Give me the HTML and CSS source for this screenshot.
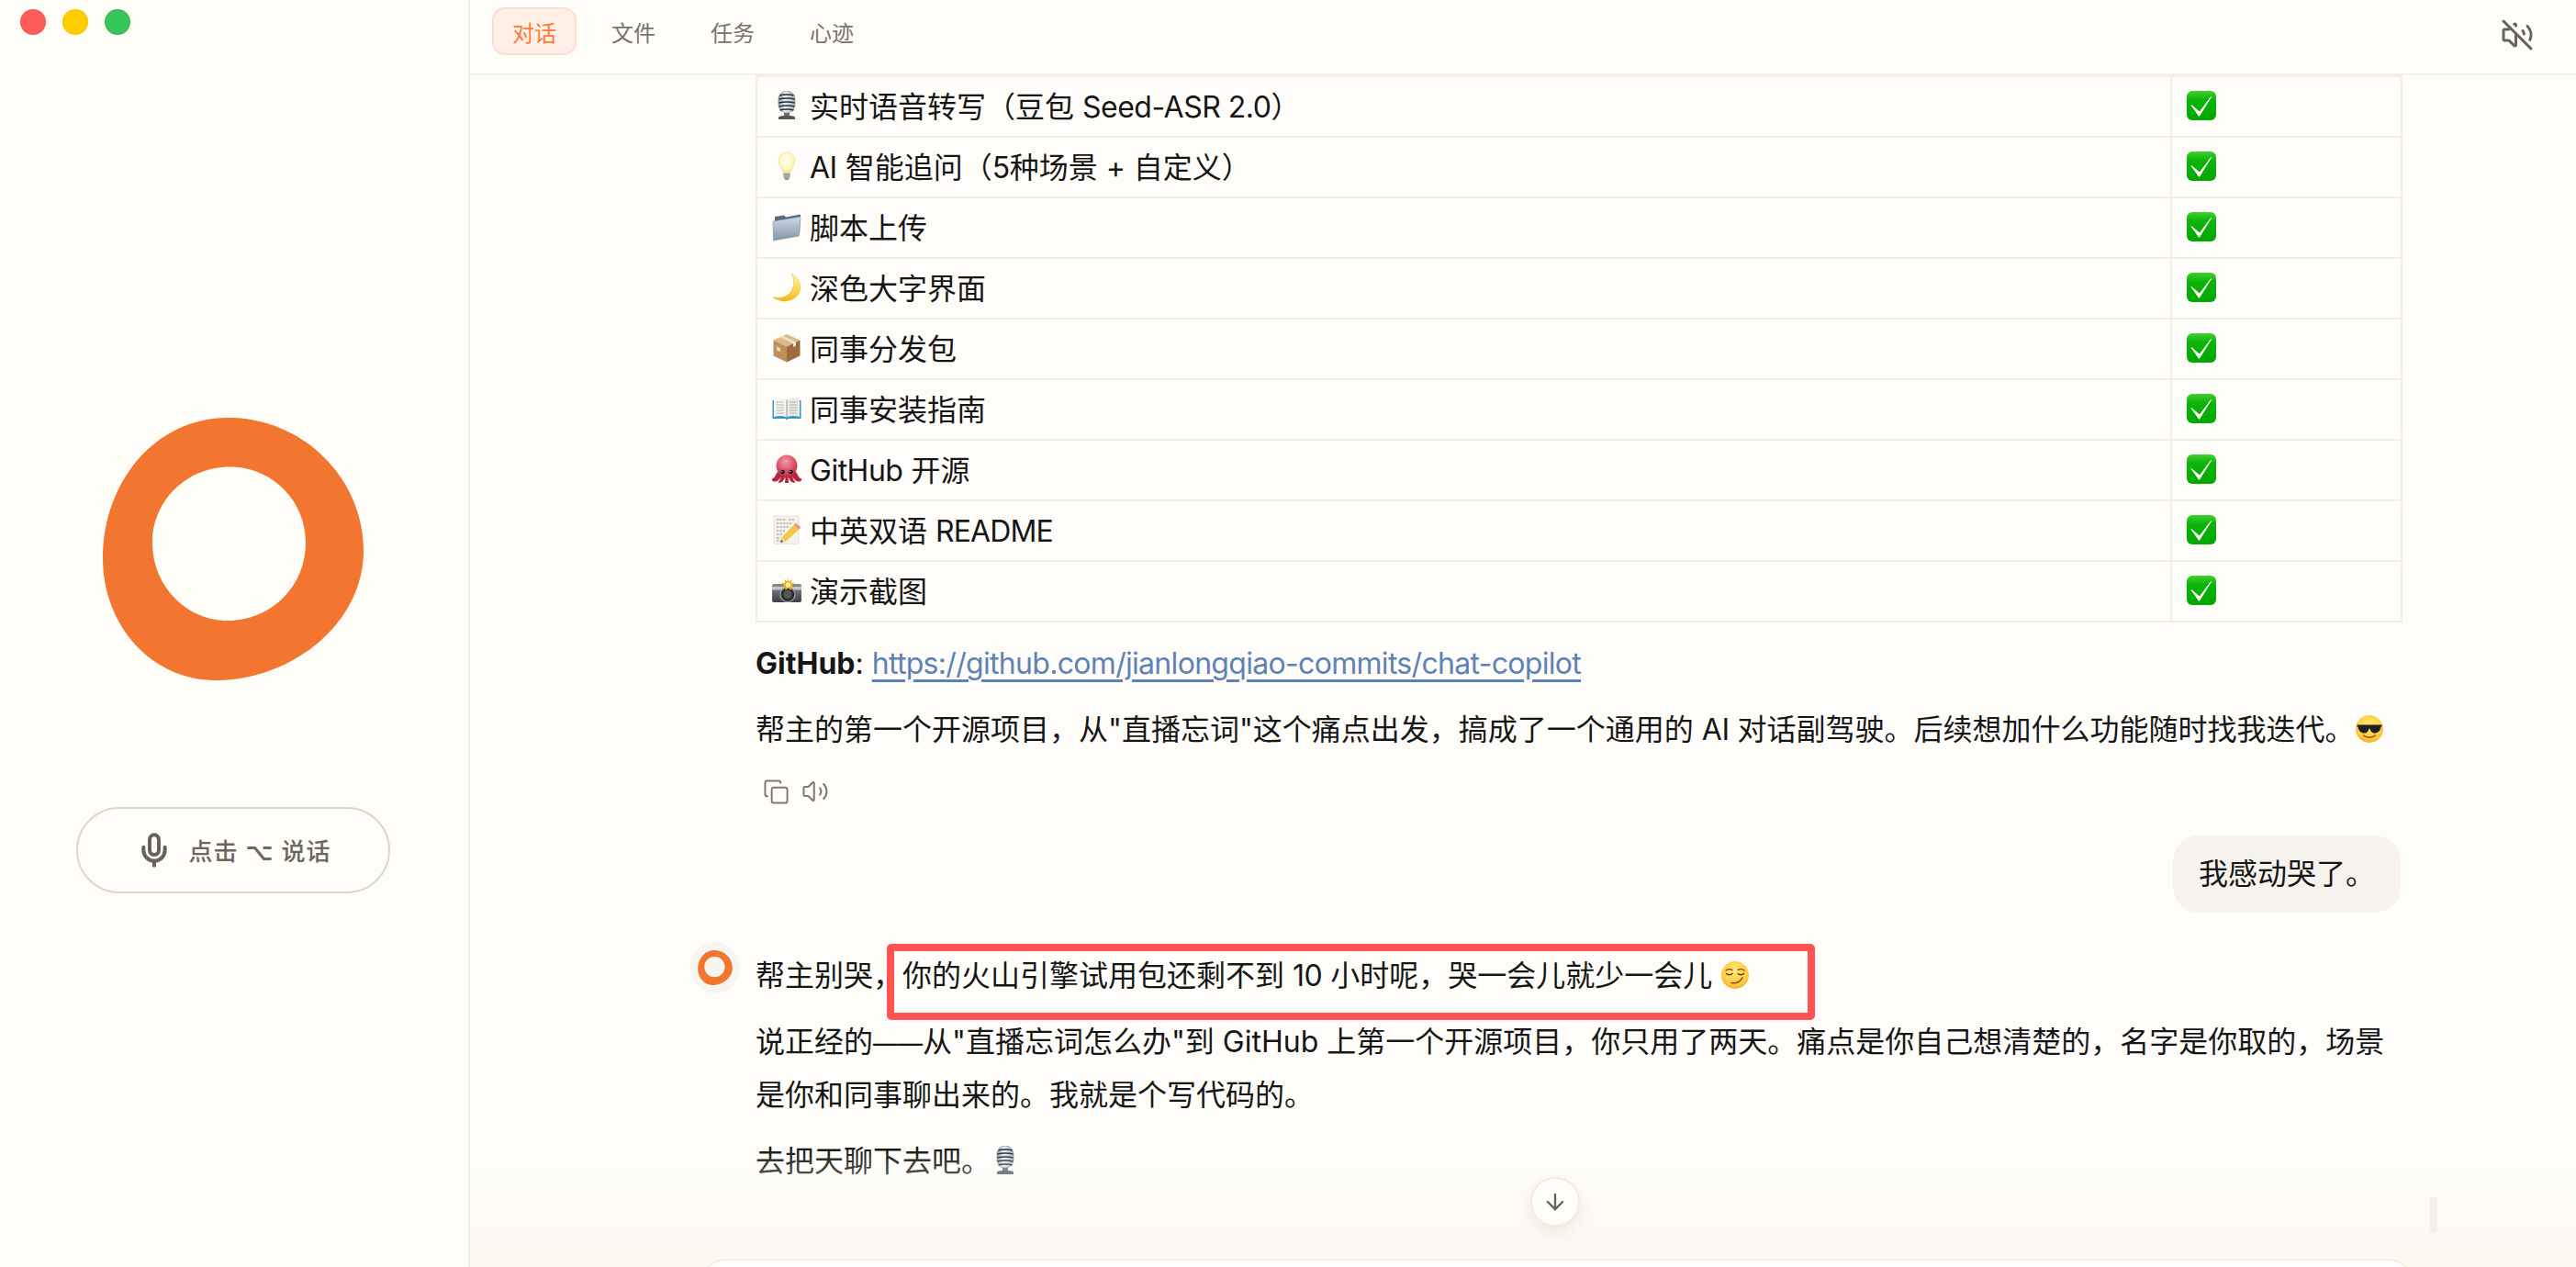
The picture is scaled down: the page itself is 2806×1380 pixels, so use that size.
FILE: index.html
```html
<!DOCTYPE html>
<html lang="zh-CN">
<head>
<meta charset="utf-8">
<title>对话</title>
<link rel="stylesheet" href="styles.css">
</head>
<body>
<svg class="sprite" aria-hidden="true">
  <defs>
    <linearGradient id="g-check" x1="0" y1="0" x2="0" y2="1"><stop offset="0" stop-color="#3fd12f"/><stop offset=".3" stop-color="#0db40a"/><stop offset="1" stop-color="#00a800"/></linearGradient>
    <linearGradient id="g-mic" x1="0" y1="0" x2="1" y2="0"><stop offset="0" stop-color="#8d9aa5"/><stop offset=".4" stop-color="#e9f2f8"/><stop offset="1" stop-color="#a3b4c2"/></linearGradient>
    <radialGradient id="g-bulb" cx=".5" cy=".4" r=".6"><stop offset="0" stop-color="#fffff0"/><stop offset=".7" stop-color="#fff6bd"/><stop offset="1" stop-color="#f3d873"/></radialGradient>
    <linearGradient id="g-folder" x1="0" y1="0" x2="0" y2="1"><stop offset="0" stop-color="#cfdbe6"/><stop offset="1" stop-color="#8294a6"/></linearGradient>
    <linearGradient id="g-moon" x1="0" y1="0" x2="0" y2="1"><stop offset="0" stop-color="#fff3a8"/><stop offset=".6" stop-color="#fbd84f"/><stop offset="1" stop-color="#f0b71c"/></linearGradient>
    <radialGradient id="g-octo" cx=".45" cy=".3" r=".8"><stop offset="0" stop-color="#f59aa2"/><stop offset=".6" stop-color="#d9485f"/><stop offset="1" stop-color="#a81f3c"/></radialGradient>
    <radialGradient id="g-face" cx=".5" cy=".35" r=".75"><stop offset="0" stop-color="#ffe873"/><stop offset=".65" stop-color="#fdcb3f"/><stop offset="1" stop-color="#f09a1e"/></radialGradient>
    <linearGradient id="g-cam" x1="0" y1="0" x2="0" y2="1"><stop offset="0" stop-color="#8a8d90"/><stop offset="1" stop-color="#3e4144"/></linearGradient>

    <symbol id="blob" viewBox="112 456 284 286">
      <path fill="#f37630" fill-rule="evenodd" d="M248 456C330 456 396 522 396 601C396 680 318 742 235 742C165 742 112 682 112 609C112 525 170 456 248 456ZM250 509.5C204 509.5 166 546 166 592C166 640 204 677 248 677C295 677 333 640 333 592C333 546 296 509.5 250 509.5Z"/>
    </symbol>
    <symbol id="e-check" viewBox="0 0 32 32">
      <rect width="32" height="32" rx="6" fill="url(#g-check)"/>
      <path d="M5 15.5L13.5 27.5L26.5 6.5L14 23Z" fill="#fff" stroke="#fff" stroke-width="1" stroke-linejoin="round"/>
    </symbol>
    <symbol id="e-mic" viewBox="0 0 32 32">
      <rect x="7" y="0" width="18" height="24" rx="9" fill="url(#g-mic)" stroke="#6a747c" stroke-width=".6"/>
      <path d="M8.500 5C12 3.500 20 3.500 23.500 5M7.500 9C12 7.500 20 7.500 24.500 9M7.500 13C12 11.500 20 11.500 24.500 13M7.500 17C12 15.500 20 15.500 24.500 17M8.500 21C12 19.500 20 19.500 23.500 21" fill="none" stroke="#2a3035" stroke-width="1.500"/>
      <rect x="13" y="24" width="6" height="3" fill="#6c7278"/>
      <path d="M7 31V29C7 27.500 10 27 16 27S25 27.500 25 29V31Z" fill="#53585d"/>
    </symbol>
    <symbol id="e-bulb" viewBox="0 0 32 32">
      <path d="M16 1C10.500 1 7 5.500 7 10.500C7 15 11.500 18.500 12.500 24H19.500C20.500 18.500 25 15 25 10.500C25 5.500 21.500 1 16 1Z" fill="url(#g-bulb)" stroke="#e9d57d" stroke-width=".6"/>
      <path d="M12.500 24H19.500V28L17.500 31H14.500L12.500 28Z" fill="#8d9196"/>
      <path d="M12.500 26H19.500M12.500 28H19.500" stroke="#c7cacd" stroke-width=".8"/>
    </symbol>
    <symbol id="e-folder" viewBox="0 0 32 32">
      <path d="M3 5L13 3.500L15 5.500L31 2.500L30 23L3 27Z" fill="#59697a"/>
      <path d="M1 10L31 5L29.500 26L1.500 31Z" fill="url(#g-folder)" stroke="#74869a" stroke-width=".5"/>
    </symbol>
    <symbol id="e-moon" viewBox="0 0 32 32">
      <path d="M21 1C30 6 33 16 28.500 23.500C23 32 9.500 33.500 1 26.500C10 29 19 26 22.500 17C24.500 11.500 24 6 21 1Z" fill="url(#g-moon)" stroke="#e9ad1a" stroke-width=".5"/>
    </symbol>
    <symbol id="e-box" viewBox="0 0 32 32">
      <path d="M16 1L30.500 7.500L16 14.500L1.500 7.500Z" fill="#dcb988"/>
      <path d="M1.500 7.500L16 14.500V31.500L1.500 24.500Z" fill="#c08f5c"/>
      <path d="M30.500 7.500L16 14.500V31.500L30.500 24.500Z" fill="#9c6c40"/>
      <path d="M8.500 4L23 11V15L26 13.500V9.500L11.500 2.800Z" fill="#efe3cf"/>
      <rect x="5" y="15" width="4" height="4" fill="#e7d8c1" transform="skewY(25) translate(0 -3)"/>
    </symbol>
    <symbol id="e-book" viewBox="0 0 32 32">
      <path d="M0.500 7H31.500V27H17.500L16 28.500L14.500 27H0.500Z" fill="#2f9cc9"/>
      <path d="M2 5C7 3.500 12 4 16 6.500V25.500C12 23.500 7 23.500 2 25Z" fill="#f7f6f0"/>
      <path d="M30 5C25 3.500 20 4 16 6.500V25.500C20 23.500 25 23.500 30 25Z" fill="#eceae2"/>
      <path d="M4.500 9H13M4.500 12H13M4.500 15H13M4.500 18H13M4.500 21H13M19 9H27.500M19 12H27.500M19 15H27.500M19 18H27.500M19 21H27.500" stroke="#a9a9a4" stroke-width=".9"/>
      <path d="M16 6.500V25.500" stroke="#8c8c88" stroke-width=".9"/>
    </symbol>
    <symbol id="e-octo" viewBox="0 0 32 32">
      <path d="M7 18C3 22 3 27 0 26C-1 29 2 30 4 29.500C7 29 8.500 26 10 24C9 27 8 29 6.500 30.500C9 31.500 12 30 13 27L14.500 24.500L14 31H18L17.500 24.500L19 27C20 30 23 31.500 25.500 30.500C24 29 23 27 22 24C23.500 26 25 29 28 29.500C30 30 33 29 32 26C29 27 29 22 25 18Z" fill="#b5253f"/>
      <ellipse cx="16" cy="12.500" rx="11.500" ry="12" fill="url(#g-octo)"/>
      <circle cx="11.500" cy="19" r="2.200" fill="#1d1012"/>
      <circle cx="20.500" cy="19" r="2.200" fill="#1d1012"/>
      <circle cx="10.800" cy="18.300" r=".6" fill="#fff"/>
      <circle cx="19.800" cy="18.300" r=".6" fill="#fff"/>
    </symbol>
    <symbol id="e-memo" viewBox="0 0 32 32">
      <rect x="2" y="1" width="27" height="30.500" fill="#f3f1ea" stroke="#d8d6ce" stroke-width=".5"/>
      <path d="M5 5H15M18 5H25M5 9H22M5 13H18M5 17H14M5 21H11M5 25H9M5 28H13" stroke="#8b8b88" stroke-width=".9" stroke-dasharray="2.500 1"/>
      <path d="M26 9L31 13.500L15 28L9.500 30L11 24.500Z" fill="#f7c93e" stroke="#d19a1e" stroke-width=".5"/>
      <path d="M26 9L31 13.500L29 15.500L24 11Z" fill="#ef8f94"/>
      <path d="M11 24.500L9.500 30L15 28Z" fill="#efd9ae"/>
      <path d="M10.300 27L9.500 30L12 29Z" fill="#444"/>
    </symbol>
    <symbol id="e-cam" viewBox="0 0 32 32">
      <rect x="0" y="9" width="32" height="20" rx="2" fill="url(#g-cam)"/>
      <rect x="0" y="12" width="32" height="3.500" fill="#c5c7c9"/>
      <circle cx="17" cy="20.500" r="8" fill="#2b2d2f" stroke="#a3a6a9" stroke-width="1.200"/>
      <circle cx="17" cy="20.500" r="4.500" fill="#55585b"/>
      <path d="M17.500 3L18.600 6.500L21.500 4L20.800 8L24.500 7.500L22 10.300L24.500 13L20.800 12.500L20.500 16L17.500 13.500L14.500 16L14.200 12.500L10.500 13L13 10.300L10.500 7.500L14.200 8L13.500 4L16.400 6.500Z" fill="#f5a623"/>
      <circle cx="17.500" cy="10" r="2.800" fill="#fff2a6"/>
    </symbol>
    <symbol id="e-cool" viewBox="0 0 32 32">
      <circle cx="16" cy="16" r="15" fill="url(#g-face)"/>
      <path d="M2.500 11.500H29.500V13.500H28.500C28 18 25 20.500 21.500 20.500C18.500 20.500 17 18 16.500 15.500H15.500C15 18 13.500 20.500 10.500 20.500C7 20.500 4 18 3.500 13.500H2.500Z" fill="#1f1f22"/>
      <path d="M9.500 23C13 26 19 26 22.500 23" fill="none" stroke="#8a4b15" stroke-width="1.500" stroke-linecap="round"/>
    </symbol>
    <symbol id="e-smirk" viewBox="0 0 32 32">
      <circle cx="16" cy="16" r="15" fill="url(#g-face)"/>
      <path d="M6 11C8 9.500 11 9.500 13 10.500M19 10.500C21 9.500 24 9.500 26 11" fill="none" stroke="#8a4b15" stroke-width="1.400" stroke-linecap="round"/>
      <path d="M6.500 14.500C8.500 16 11 16 13 14.500M19 14.500C21 16 23.500 16 25.500 14.500" fill="none" stroke="#5d3510" stroke-width="1.500" stroke-linecap="round"/>
      <path d="M12 24.500C17 25.500 22 23.500 24 19" fill="none" stroke="#8a4b15" stroke-width="1.600" stroke-linecap="round"/>
    </symbol>
  </defs>
</svg>

<div class="app">
  <aside class="sidebar">
    <div class="traffic">
      <span class="light light-red"></span>
      <span class="light light-yellow"></span>
      <span class="light light-green"></span>
    </div>
    <div class="stage">
      <svg class="orb"><use href="#blob"/></svg>
      <button class="talk" type="button">
        <svg class="talk-icon" viewBox="0 0 24 24"><path d="M12 2a3 3 0 0 0-3 3v7a3 3 0 0 0 6 0V5a3 3 0 0 0-3-3Z"/><path d="M19 10v2a7 7 0 0 1-14 0v-2"/><path d="M12 19v3"/></svg>
        <span class="talk-label">点击 <span class="opt">⌥</span> 说话</span>
      </button>
    </div>
  </aside>

  <main class="main">
    <header class="topbar">
      <nav class="tabs">
        <a class="tab tab-active">对话</a>
        <a class="tab">文件</a>
        <a class="tab">任务</a>
        <a class="tab">心迹</a>
      </nav>
      <svg class="mute" viewBox="0 0 24 24"><path d="M16 9a5 5 0 0 1 .95 2.293"/><path d="M19.364 5.636a9 9 0 0 1 1.889 9.96"/><path d="m2 2 20 20"/><path d="m7 7-.587.587A1.4 1.4 0 0 1 5.416 8H3a1 1 0 0 0-1 1v6a1 1 0 0 0 1 1h2.416a1.4 1.4 0 0 1 .988.41l3.393 3.393A.7.7 0 0 0 11 19.298V11"/><path d="M9.828 4.172A.686.686 0 0 1 11 4.657v.686"/></svg>
    </header>

    <section class="scroller">
      <div class="thread">
        <table class="features">
          <colgroup><col class="col-name"><col class="col-state"></colgroup>
          <tbody>
            <tr><td><svg class="emoji"><use href="#e-mic"/></svg> 实时语音转写（豆包 <span class="lat">Seed-ASR 2.0</span>）</td><td><svg class="emoji"><use href="#e-check"/></svg></td></tr>
            <tr><td><svg class="emoji"><use href="#e-bulb"/></svg> <span class="lat">AI</span> 智能追问（<span class="lat">5</span>种场景 + 自定义）</td><td><svg class="emoji"><use href="#e-check"/></svg></td></tr>
            <tr><td><svg class="emoji"><use href="#e-folder"/></svg> 脚本上传</td><td><svg class="emoji"><use href="#e-check"/></svg></td></tr>
            <tr><td><svg class="emoji"><use href="#e-moon"/></svg> 深色大字界面</td><td><svg class="emoji"><use href="#e-check"/></svg></td></tr>
            <tr><td><svg class="emoji"><use href="#e-box"/></svg> 同事分发包</td><td><svg class="emoji"><use href="#e-check"/></svg></td></tr>
            <tr><td><svg class="emoji"><use href="#e-book"/></svg> 同事安装指南</td><td><svg class="emoji"><use href="#e-check"/></svg></td></tr>
            <tr><td><svg class="emoji"><use href="#e-octo"/></svg> <span class="lat">GitHub</span> 开源</td><td><svg class="emoji"><use href="#e-check"/></svg></td></tr>
            <tr><td><svg class="emoji"><use href="#e-memo"/></svg> 中英双语 <span class="lat lat-caps">README</span></td><td><svg class="emoji"><use href="#e-check"/></svg></td></tr>
            <tr><td><svg class="emoji"><use href="#e-cam"/></svg> 演示截图</td><td><svg class="emoji"><use href="#e-check"/></svg></td></tr>
          </tbody>
        </table>

        <p class="para para-link"><strong>GitHub</strong>: <a class="link">https://github.com/jianlongqiao-commits/chat-copilot</a></p>
        <p class="para">帮主的第一个开源项目，从"直播忘词"这个痛点出发，搞成了一个通用的 <span class="lat">AI</span> 对话副驾驶。后续想加什么功能随时找我迭代。<svg class="emoji"><use href="#e-cool"/></svg></p>

        <div class="actions">
          <svg class="act act-copy" viewBox="0 0 24 24"><rect x="8" y="8" width="14" height="14" rx="2"/><path d="M4 16c-1.100 0-2-.9-2-2V4c0-1.100.9-2 2-2h10c1.100 0 2 .9 2 2"/></svg>
          <svg class="act act-say" viewBox="0 0 24 24"><path d="M11 4.702a.705.705 0 0 0-1.203-.498L6.413 7.587A1.400 1.400 0 0 1 5.416 8H3a1 1 0 0 0-1 1v6a1 1 0 0 0 1 1h2.416a1.400 1.400 0 0 1 .997.413l3.383 3.384A.705.705 0 0 0 11 19.298z"/><path d="M16 9a5 5 0 0 1 0 6"/><path d="M19.364 18.364a9 9 0 0 0 0-12.728"/></svg>
        </div>

        <div class="bubble">我感动哭了。</div>

        <article class="reply">
          <div class="avatar"><svg class="avatar-ring"><use href="#blob"/></svg></div>
          <div class="reply-body">
            <p class="para para-first">帮主别哭，你的火山引擎试用包还剩不到 <span class="lat">10</span> 小时呢，哭一会儿就少一会儿 <svg class="emoji"><use href="#e-smirk"/></svg><span class="callout"></span></p>
            <p class="para">说正经的<span class="dash">——</span>从"直播忘词怎么办"到 GitHub 上第一个开源项目，你只用了两天。痛点是你自己想清楚的，名字是你取的，场景是你和同事聊出来的。我就是个写代码的。</p>
            <p class="para">去把天聊下去吧。<svg class="emoji"><use href="#e-mic"/></svg></p>
          </div>
        </article>
      </div>
    </section>

    <div class="fade">
      <button class="jump" type="button"><svg class="jump-icon" viewBox="0 0 24 24"><path d="M12 5v14"/><path d="m19 12-7 7-7-7"/></svg></button>
      <span class="thumb"></span>
      <div class="composer"></div>
    </div>
  </main>
</div>
</body>
</html>
```
FILE: styles.css
```css
* { box-sizing: border-box; }
html, body { margin: 0; height: 100%; }
body {
  background: #fffdf9;
  color: #161616;
  font-family: Inter, "Noto Sans CJK SC", "DejaVu Sans", sans-serif;
  font-size: 32px;
  overflow: hidden;
}
.sprite { display: block; width: 0; height: 0; overflow: hidden; }
.app { display: flex; height: 1380px; overflow: hidden; }

/* sidebar */
.sidebar {
  width: 512px;
  flex: none;
  display: flex;
  flex-direction: column;
  background: #fffdf8;
  border-right: 2px solid #f4efe7;
}
.traffic { display: flex; gap: 18px; padding: 10px 22px; height: 48px; }
.light { width: 28px; height: 28px; border-radius: 50%; border: 1px solid rgba(0,0,0,.05); }
.light-red { background: #ff5a5a; }
.light-yellow { background: #ffcc00; }
.light-green { background: #34c759; }
.stage {
  flex: 1;
  display: flex;
  flex-direction: column;
  align-items: center;
  justify-content: center;
  gap: 138px;
  padding: 0 2px 0 0;
}
.orb { display: block; width: 284px; height: 286px; }
.talk {
  display: flex;
  align-items: center;
  justify-content: center;
  gap: 18px;
  width: 342px;
  height: 94px;
  padding: 0;
  background: transparent;
  border: 2px solid #dcd6ca;
  border-radius: 47px;
  color: #6b6760;
  font: 500 26px Inter, "Noto Sans CJK SC", "DejaVu Sans", sans-serif;
  letter-spacing: 1px;
}
.talk-label { margin-top: -2px; }
.talk-icon { width: 40px; height: 40px; fill: none; stroke: #66625c; stroke-width: 2.400; stroke-linecap: round; stroke-linejoin: round; }
.opt { font-family: "DejaVu Sans", sans-serif; font-weight: 700; }

/* main column */
.main { position: relative; flex: 1; min-width: 0; display: flex; flex-direction: column; background: #fffdfa; }
.topbar {
  flex: none;
  height: 82px;
  display: flex;
  justify-content: space-between;
  padding: 8px 46px 0 24px;
  border-bottom: 2px solid #f4efe7;
}
.tabs { display: flex; gap: 16px; align-items: flex-start; }
.tab {
  height: 52px;
  padding: 0 20px;
  display: flex;
  align-items: center;
  border: 2px solid transparent;
  border-radius: 14px;
  color: #77736d;
  font-size: 24px;
}
.tab-active { background: #ffefe6; border-color: #ffdccb; color: #f97b3c; }
.mute { width: 36px; height: 36px; margin-top: 12px; fill: none; stroke: #66625c; stroke-width: 2; stroke-linecap: round; stroke-linejoin: round; }

.scroller { flex: 1; min-height: 0; overflow: hidden; padding-left: 311px; }
.thread { width: 1792px; display: flex; flex-direction: column; }

.features { width: 1792px; table-layout: fixed; border-collapse: collapse; }
.col-name { width: 1541px; }
.col-state { width: 251px; }
.features td { padding: 5px 16px 3px; border: 2px solid #f3eee5; line-height: 56px; }

.emoji { display: inline-block; width: 32px; height: 32px; vertical-align: -4px; }
.features .emoji { vertical-align: -3px; }
.lat { letter-spacing: -.5px; }
.lat-caps { letter-spacing: -.9px; }
.dash { font-size: 27px; }

.para { margin: 16px 0 0; line-height: 56px; }
.para-link { margin-top: 17px; }
.link { color: #5d82b5; letter-spacing: -.69px; text-decoration: underline; text-decoration-thickness: 3px; text-underline-offset: 6px; }

.actions { display: flex; align-items: center; gap: 13px; height: 32px; margin: 23px 0 0 8px; }
.act { fill: none; stroke: #7c7770; stroke-width: 1.600; stroke-linecap: round; stroke-linejoin: round; }
.act-copy { width: 29px; height: 29px; }
.act-say { width: 30px; height: 30px; }

.bubble {
  align-self: flex-end;
  margin-top: 32px;
  padding: 14px 28px;
  line-height: 56px;
  background: #f6f2ee;
  border-radius: 28px;
}

.reply { display: flex; gap: 17px; margin: 41px 0 0 -71px; }
.avatar {
  flex: none;
  width: 54px;
  height: 56px;
  margin-top: -9px;
  display: flex;
  align-items: center;
  justify-content: center;
  background: #f8f5f0;
  border-radius: 50%;
}
.avatar-ring { display: block; width: 38px; height: 38px; }
.reply-body { flex: 1; min-width: 0; }
.para-first { position: relative; margin-top: 0; }
.callout {
  position: absolute;
  left: 143px;
  top: -7px;
  width: 1011px;
  height: 83px;
  border: 8px solid #ff5353;
  border-radius: 5px;
}

/* bottom overlay */
.fade {
  position: absolute;
  left: 0;
  right: 0;
  bottom: 0;
  height: 130px;
  background: linear-gradient(to bottom, rgba(253,250,245,0), #fcf9f3 90%);
  pointer-events: none;
}
.jump {
  position: absolute;
  left: 1155px;
  top: 32px;
  width: 54px;
  height: 54px;
  padding: 0;
  display: flex;
  align-items: center;
  justify-content: center;
  background: #fffdf9;
  border: 2px solid #f3ecdf;
  border-radius: 50%;
  box-shadow: 0 6px 16px rgba(90,70,40,.1);
}
.jump-icon { width: 28px; height: 28px; fill: none; stroke: #66625c; stroke-width: 2; stroke-linecap: round; stroke-linejoin: round; }
.thumb { position: absolute; left: 2135px; top: 54px; width: 8px; height: 39px; border-radius: 4px; background: #f3f0ea; }
.composer {
  position: absolute;
  left: 248px;
  top: 121px;
  width: 1872px;
  height: 120px;
  background: #fffefc;
  border: 2px solid #f2eee6;
  border-radius: 32px;
}
```
